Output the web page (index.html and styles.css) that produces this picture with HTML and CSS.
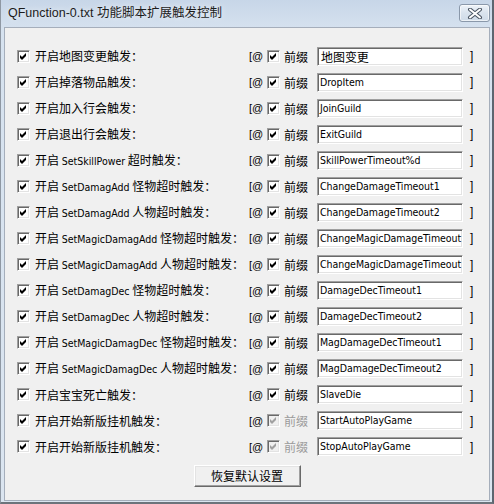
FILE: index.html
```html
<!DOCTYPE html>
<html lang="zh-CN">
<head>
<meta charset="utf-8">
<title>QFunction-0.txt 功能脚本扩展触发控制</title>
<link rel="stylesheet" href="styles.css">
</head>
<body>
<div class="window">
  <div class="titlebar">
    <span class="title">QFunction-0.txt 功能脚本扩展触发控制</span>
    <span class="close"><svg width="18" height="11" viewBox="0 0 18 11"><path d="M4 1.5 L14 9.5 M14 1.5 L4 9.5" stroke="#4a5563" stroke-width="4" stroke-linecap="round"/><path d="M4 1.5 L14 9.5 M14 1.5 L4 9.5" stroke="#ffffff" stroke-width="2" stroke-linecap="round"/></svg></span>
  </div>
  <div class="client">
    <div class="rows">
      <div class="row"><span class="cb"><svg viewBox="0 0 11 11"><polygon points="2,4 4,6 8,2 8,5 4,9 2,7"/></svg></span><span class="label">开启地图变更触发：</span><span class="br">[@</span><span class="cb"><svg viewBox="0 0 11 11"><polygon points="2,4 4,6 8,2 8,5 4,9 2,7"/></svg></span><span class="pre">前缀</span><span class="field"><span class="cjk">地图变更</span></span><span class="end">]</span></div>
      <div class="row"><span class="cb"><svg viewBox="0 0 11 11"><polygon points="2,4 4,6 8,2 8,5 4,9 2,7"/></svg></span><span class="label">开启掉落物品触发：</span><span class="br">[@</span><span class="cb"><svg viewBox="0 0 11 11"><polygon points="2,4 4,6 8,2 8,5 4,9 2,7"/></svg></span><span class="pre">前缀</span><span class="field">DropItem</span><span class="end">]</span></div>
      <div class="row"><span class="cb"><svg viewBox="0 0 11 11"><polygon points="2,4 4,6 8,2 8,5 4,9 2,7"/></svg></span><span class="label">开启加入行会触发：</span><span class="br">[@</span><span class="cb"><svg viewBox="0 0 11 11"><polygon points="2,4 4,6 8,2 8,5 4,9 2,7"/></svg></span><span class="pre">前缀</span><span class="field">JoinGuild</span><span class="end">]</span></div>
      <div class="row"><span class="cb"><svg viewBox="0 0 11 11"><polygon points="2,4 4,6 8,2 8,5 4,9 2,7"/></svg></span><span class="label">开启退出行会触发：</span><span class="br">[@</span><span class="cb"><svg viewBox="0 0 11 11"><polygon points="2,4 4,6 8,2 8,5 4,9 2,7"/></svg></span><span class="pre">前缀</span><span class="field">ExitGuild</span><span class="end">]</span></div>
      <div class="row"><span class="cb"><svg viewBox="0 0 11 11"><polygon points="2,4 4,6 8,2 8,5 4,9 2,7"/></svg></span><span class="label">开启 <span class="en">SetSkillPower</span> 超时触发：</span><span class="br">[@</span><span class="cb"><svg viewBox="0 0 11 11"><polygon points="2,4 4,6 8,2 8,5 4,9 2,7"/></svg></span><span class="pre">前缀</span><span class="field">SkillPowerTimeout%d</span><span class="end">]</span></div>
      <div class="row"><span class="cb"><svg viewBox="0 0 11 11"><polygon points="2,4 4,6 8,2 8,5 4,9 2,7"/></svg></span><span class="label">开启 <span class="en">SetDamagAdd</span> 怪物超时触发：</span><span class="br">[@</span><span class="cb"><svg viewBox="0 0 11 11"><polygon points="2,4 4,6 8,2 8,5 4,9 2,7"/></svg></span><span class="pre">前缀</span><span class="field">ChangeDamageTimeout1</span><span class="end">]</span></div>
      <div class="row"><span class="cb"><svg viewBox="0 0 11 11"><polygon points="2,4 4,6 8,2 8,5 4,9 2,7"/></svg></span><span class="label">开启 <span class="en">SetDamagAdd</span> 人物超时触发：</span><span class="br">[@</span><span class="cb"><svg viewBox="0 0 11 11"><polygon points="2,4 4,6 8,2 8,5 4,9 2,7"/></svg></span><span class="pre">前缀</span><span class="field">ChangeDamageTimeout2</span><span class="end">]</span></div>
      <div class="row"><span class="cb"><svg viewBox="0 0 11 11"><polygon points="2,4 4,6 8,2 8,5 4,9 2,7"/></svg></span><span class="label">开启 <span class="en">SetMagicDamagAdd</span> 怪物超时触发：</span><span class="br">[@</span><span class="cb"><svg viewBox="0 0 11 11"><polygon points="2,4 4,6 8,2 8,5 4,9 2,7"/></svg></span><span class="pre">前缀</span><span class="field">ChangeMagicDamageTimeout</span><span class="end">]</span></div>
      <div class="row"><span class="cb"><svg viewBox="0 0 11 11"><polygon points="2,4 4,6 8,2 8,5 4,9 2,7"/></svg></span><span class="label">开启 <span class="en">SetMagicDamagAdd</span> 人物超时触发：</span><span class="br">[@</span><span class="cb"><svg viewBox="0 0 11 11"><polygon points="2,4 4,6 8,2 8,5 4,9 2,7"/></svg></span><span class="pre">前缀</span><span class="field">ChangeMagicDamageTimeout</span><span class="end">]</span></div>
      <div class="row"><span class="cb"><svg viewBox="0 0 11 11"><polygon points="2,4 4,6 8,2 8,5 4,9 2,7"/></svg></span><span class="label">开启 <span class="en">SetDamagDec</span> 怪物超时触发：</span><span class="br">[@</span><span class="cb"><svg viewBox="0 0 11 11"><polygon points="2,4 4,6 8,2 8,5 4,9 2,7"/></svg></span><span class="pre">前缀</span><span class="field">DamageDecTimeout1</span><span class="end">]</span></div>
      <div class="row"><span class="cb"><svg viewBox="0 0 11 11"><polygon points="2,4 4,6 8,2 8,5 4,9 2,7"/></svg></span><span class="label">开启 <span class="en">SetDamagDec</span> 人物超时触发：</span><span class="br">[@</span><span class="cb"><svg viewBox="0 0 11 11"><polygon points="2,4 4,6 8,2 8,5 4,9 2,7"/></svg></span><span class="pre">前缀</span><span class="field">DamageDecTimeout2</span><span class="end">]</span></div>
      <div class="row"><span class="cb"><svg viewBox="0 0 11 11"><polygon points="2,4 4,6 8,2 8,5 4,9 2,7"/></svg></span><span class="label">开启 <span class="en">SetMagicDamagDec</span> 怪物超时触发：</span><span class="br">[@</span><span class="cb"><svg viewBox="0 0 11 11"><polygon points="2,4 4,6 8,2 8,5 4,9 2,7"/></svg></span><span class="pre">前缀</span><span class="field">MagDamageDecTimeout1</span><span class="end">]</span></div>
      <div class="row"><span class="cb"><svg viewBox="0 0 11 11"><polygon points="2,4 4,6 8,2 8,5 4,9 2,7"/></svg></span><span class="label">开启 <span class="en">SetMagicDamagDec</span> 人物超时触发：</span><span class="br">[@</span><span class="cb"><svg viewBox="0 0 11 11"><polygon points="2,4 4,6 8,2 8,5 4,9 2,7"/></svg></span><span class="pre">前缀</span><span class="field">MagDamageDecTimeout2</span><span class="end">]</span></div>
      <div class="row"><span class="cb"><svg viewBox="0 0 11 11"><polygon points="2,4 4,6 8,2 8,5 4,9 2,7"/></svg></span><span class="label">开启宝宝死亡触发：</span><span class="br">[@</span><span class="cb"><svg viewBox="0 0 11 11"><polygon points="2,4 4,6 8,2 8,5 4,9 2,7"/></svg></span><span class="pre">前缀</span><span class="field">SlaveDie</span><span class="end">]</span></div>
      <div class="row"><span class="cb"><svg viewBox="0 0 11 11"><polygon points="2,4 4,6 8,2 8,5 4,9 2,7"/></svg></span><span class="label">开启开始新版挂机触发：</span><span class="br">[@</span><span class="cb dis"><svg viewBox="0 0 11 11"><polygon points="2,4 4,6 8,2 8,5 4,9 2,7"/></svg></span><span class="pre dis">前缀</span><span class="field">StartAutoPlayGame</span><span class="end">]</span></div>
      <div class="row"><span class="cb"><svg viewBox="0 0 11 11"><polygon points="2,4 4,6 8,2 8,5 4,9 2,7"/></svg></span><span class="label">开启开始新版挂机触发：</span><span class="br">[@</span><span class="cb dis"><svg viewBox="0 0 11 11"><polygon points="2,4 4,6 8,2 8,5 4,9 2,7"/></svg></span><span class="pre dis">前缀</span><span class="field">StopAutoPlayGame</span><span class="end">]</span></div>
    </div>
    <div class="actions"><span class="btn">恢复默认设置</span></div>
  </div>
</div>
</body>
</html>
```

FILE: styles.css
```css
* { box-sizing: border-box; }
html, body { margin: 0; padding: 0; }
body {
  width: 494px;
  height: 504px;
  overflow: hidden;
  background: #c9d6e4;
  font-family: "Noto Sans CJK SC", "Liberation Sans", sans-serif;
  color: #000;
}
.window {
  width: 494px;
  height: 504px;
  display: flex;
  flex-direction: column;
  background: linear-gradient(#c7d6e8, #d6e2ef 30px, #dbe5f0);
  border-left: 1px solid #8f98a3;
  border-right: 2px solid #5c6670;
  border-bottom: 2px solid #6c737b;
  padding: 0 2px 1px 3px;
}
.titlebar {
  height: 27px;
  display: flex;
  align-items: center;
  justify-content: space-between;
  padding: 0 0 4px 4px;
}
.title {
  font-family: "Liberation Sans", "Noto Sans CJK SC", sans-serif;
  font-size: 12.5px;
  color: #1c1c1c;
  text-shadow: 0 0 6px rgba(255,255,255,0.8);
}
.close {
  width: 31px;
  height: 18px;
  border: 1px solid #8a98aa;
  border-radius: 3px;
  background: linear-gradient(#eef3f9, #d9e3ee 50%, #cfdbe8);
  box-shadow: inset 0 0 0 1px rgba(255,255,255,0.6);
  display: flex;
  align-items: center;
  justify-content: center;
  margin-top: 3px;
}
.close svg { display: block; }
.client {
  flex: 1;
  background: #f0f0f0;
  border: 1px solid #a5aebb;
  padding-top: 15px;
  display: flex;
  flex-direction: column;
}
.rows {
  display: flex;
  flex-direction: column;
}
.row {
  height: 26.07px;
  display: grid;
  grid-template-columns: 13px 218px 19px 13px 37px 146px auto;
  align-items: center;
  padding-left: 12px;
  font-size: 12px;
}
.cb {
  width: 13px;
  height: 13px;
  background: #fff;
  border-top: 1px solid #a0a0a0;
  border-left: 1px solid #a0a0a0;
  border-right: 1px solid #ffffff;
  border-bottom: 1px solid #ffffff;
  box-shadow: inset 1px 1px 0 #696969, inset -1px -1px 0 #e3e3e3;
  display: block;
}
.cb svg { display: block; width: 11px; height: 11px; fill: #000; }
.cb.dis svg { fill: #a0a0a0; }
.cb.dis { background: #f0f0f0; }
.label {
  padding-left: 5px;
  white-space: nowrap;
  line-height: 16px;
}
.en {
  font-family: "DejaVu Sans Condensed", "DejaVu Sans", sans-serif;
  font-stretch: semi-condensed;
  font-size: 10.5px;
}
.br {
  font-family: "Liberation Sans", sans-serif;
  font-size: 11px;
  padding-left: 1px;
}
.pre {
  padding-left: 4px;
  font-size: 12px;
}
.pre.dis { color: #9b9b9b; }
.field {
  height: 19px;
  background: #fff;
  border-top: 1px solid #a0a0a0;
  border-left: 1px solid #a0a0a0;
  border-right: 1px solid #ffffff;
  border-bottom: 1px solid #ffffff;
  box-shadow: inset 1px 1px 0 #696969, inset -1px -1px 0 #e3e3e3;
  padding-left: 2px;
  font-family: "DejaVu Sans Condensed", "DejaVu Sans", "Noto Sans CJK SC", sans-serif;
  font-stretch: semi-condensed;
  font-size: 10.5px;
  letter-spacing: -0.05px;
  line-height: 17px;
  white-space: nowrap;
  overflow: hidden;
}
.cjk {
  font-family: "Noto Sans CJK SC", sans-serif;
  font-size: 12px;
  padding-left: 1px;
}
.end {
  padding-left: 7px;
  font-family: "Liberation Sans", sans-serif;
  font-size: 12px;
}
.actions {
  display: flex;
  justify-content: center;
  padding-top: 5px;
}
.btn {
  width: 107px;
  height: 22px;
  background: #f0f0f0;
  border-top: 1px solid #ffffff;
  border-left: 1px solid #ffffff;
  border-right: 1px solid #696969;
  border-bottom: 1px solid #696969;
  box-shadow: inset -1px -1px 0 #a0a0a0, inset 1px 1px 0 #e3e3e3;
  display: flex;
  align-items: center;
  justify-content: center;
  font-size: 12px;
  padding-bottom: 1px;
}
```
